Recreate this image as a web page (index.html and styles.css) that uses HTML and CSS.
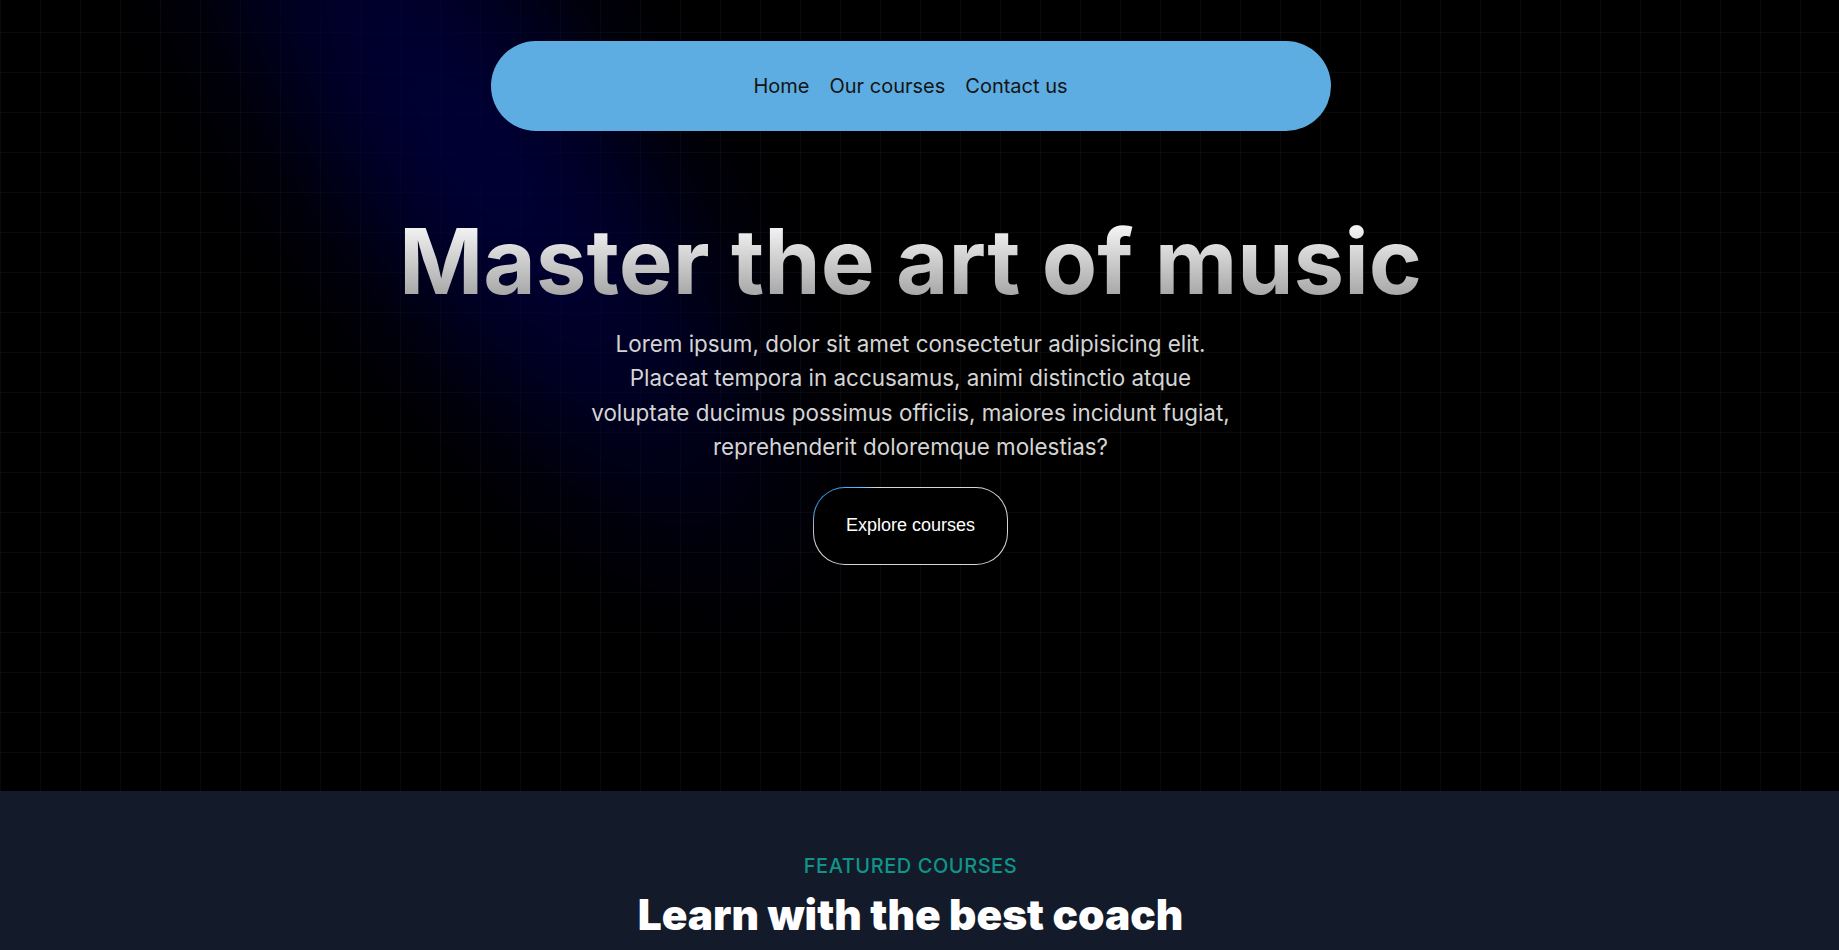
FILE: index.html
```html
<!DOCTYPE html>
<html lang="en">
<head>
<meta charset="utf-8">
<title>Master the art of music</title>
<link rel="stylesheet" href="styles.css">
</head>
<body>
<section class="hero">
  <div class="glow"></div>
  <div class="hero-inner">
    <nav class="nav">
      <a href="#" class="nav-link">Home</a>
      <a href="#" class="nav-link">Our courses</a>
      <a href="#" class="nav-link">Contact us</a>
    </nav>
    <h1 class="hero-title">Master the art of music</h1>
    <p class="hero-text">Lorem ipsum, dolor sit amet consectetur adipisicing elit. Placeat tempora in accusamus, animi distinctio atque voluptate ducimus possimus officiis, maiores incidunt fugiat, reprehenderit doloremque molestias?</p>
    <button class="cta">Explore courses</button>
  </div>
</section>
<section class="featured">
  <div class="featured-inner">
    <p class="eyebrow">FEATURED COURSES</p>
    <h2 class="featured-title">Learn with the best coach</h2>
  </div>
</section>
</body>
</html>
```
FILE: styles.css
```css
html, body {
  margin: 0;
  padding: 0;
  background: #000;
  font-family: Inter, "Noto Sans", sans-serif;
}

.hero {
  position: relative;
  overflow: hidden;
  height: 791px;
  background-color: #000;
  background-image:
    linear-gradient(to right, rgba(255,255,255,0.04) 1px, transparent 1px),
    linear-gradient(to bottom, rgba(255,255,255,0.04) 1px, transparent 1px);
  background-size: 40px 40px;
  background-position: 0 -8px;
}

.glow {
  position: absolute;
  left: 285px;
  top: -400px;
  width: 380px;
  height: 1100px;
  transform: rotate(-35deg);
  background: radial-gradient(ellipse at center, rgba(0,0,62,0.95) 0%, rgba(0,0,55,0.75) 35%, rgba(0,0,40,0.3) 60%, transparent 75%);
  filter: blur(50px);
  pointer-events: none;
}

.hero-inner {
  position: relative;
  display: flex;
  flex-direction: column;
  align-items: center;
  padding: 41px 18px 0 0;
}

.nav {
  width: 840px;
  height: 90px;
  border-radius: 45px;
  background: #5dade2;
  display: flex;
  justify-content: center;
  align-items: center;
  gap: 20px;
}

.nav-link {
  color: #141414;
  text-decoration: none;
  font-size: 20px;
  font-weight: 400;
}

.hero-title {
  margin: 85px 0 0;
  font-size: 90.5px;
  line-height: 1;
  font-weight: 700;
  letter-spacing: 0;
  background: linear-gradient(180deg, #ffffff 0%, #9a9a9a 100%);
  -webkit-background-clip: text;
  background-clip: text;
  color: transparent;
}

.hero-text {
  margin: 20px 0 0;
  width: 650px;
  text-align: center;
  font-size: 22.4px;
  line-height: 34.5px;
  color: #d4d4d4;
}

.cta {
  margin-top: 22px;
  padding: 27.5px 32px;
  border: 1px solid transparent;
  border-radius: 32px;
  font-family: "Liberation Sans", Arial, sans-serif;
  font-size: 18px;
  color: #fff;
  background:
    linear-gradient(#000, #000) padding-box,
    conic-gradient(from 0deg, #d6d6d6 0deg, #d6d6d6 262deg, #1f8fe0 285deg, #4fb8ff 305deg, #d6d6d6 318deg, #d6d6d6 360deg) border-box;
  cursor: pointer;
}

.featured {
  background: #131a2a;
  height: 200px;
}

.featured-inner {
  display: flex;
  flex-direction: column;
  align-items: center;
  padding: 61px 18px 0 0;
}

.eyebrow {
  margin: 0;
  font-size: 20px;
  line-height: 28px;
  font-weight: 500;
  letter-spacing: 0.55px;
  color: #0f9488;
}

.featured-title {
  margin: 12px 0 0;
  font-size: 42.4px;
  line-height: 1.1;
  font-weight: 900;
  color: #fff;
}
```
